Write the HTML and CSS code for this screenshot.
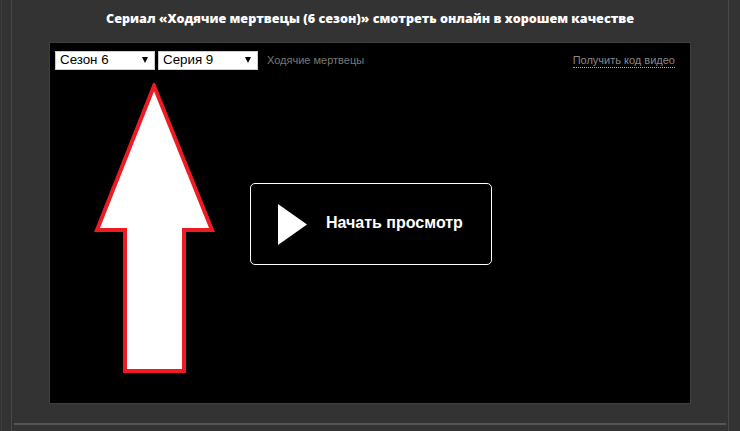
FILE: index.html
```html
<!DOCTYPE html>
<html>
  <head>
    <title>Сериал «Ходячие мертвецы (6 сезон)»</title>
    <link rel="stylesheet" href="styles.css">
  </head>
  <body>
    <div class="page">
      <div class="content">
        <h1 class="title">Сериал «Ходячие мертвецы (6 сезон)» смотреть онлайн в хорошем качестве</h1>

        <div class="player">
          <div class="player-bar">
            <span class="select-box">
              <select class="select">
                <option>Сезон 6</option>
              </select>
            </span>
            <span class="select-box">
              <select class="select">
                <option>Серия 9</option>
              </select>
            </span>
            <span class="show-name">Ходячие мертвецы</span>
            <a class="embed-link">Получить код видео</a>
          </div>

          <div class="player-main">
            <div class="start-btn">
              <svg class="play-icon" width="30" height="41" viewBox="0 0 30 41">
                <path d="M1 0 L30 20.5 L1 41 Z" fill="#fff" />
              </svg>
              <span class="start-label">Начать просмотр</span>
            </div>
          </div>

          <!-- annotation drawn over the player -->
          <svg class="arrow" width="124" height="294" viewBox="0 0 124 294">
            <path
              d="M60 3 L3 147 L31 147 L31 288 L90 288 L90 147 L118 147 Z"
              fill="#fff"
              stroke="#ed1c24"
              stroke-width="4"
              stroke-linejoin="miter"
            />
          </svg>
        </div>

        <div class="bottom-line"></div>
      </div>
    </div>
  </body>
</html>
```

FILE: styles.css
```css
html,
body {
  margin: 0;
  height: 431px;
  overflow: hidden;
}
body {
  background: #333;
  font-family: "Liberation Sans", Arial, sans-serif;
}
.page {
  height: 431px;
  margin-left: 1px;
  width: 739px;
  border-left: 1px solid #3c3c3c;
  box-sizing: border-box;
}
.content {
  margin-left: 9px;
  width: 718px;
  height: 431px;
  border-left: 1px solid #484848;
  border-right: 1px solid #484848;
  padding: 0 2px 0 2px;
  box-sizing: border-box;
}
.title {
  margin: 0;
  height: 43px;
  padding-top: 11px;
  box-sizing: border-box;
  font-family: "Open Sans", sans-serif;
  font-size: 12.6px;
  font-weight: 800;
  line-height: 16px;
  color: #fff;
  text-align: center;
}
.player {
  position: relative;
  width: 640px;
  height: 360px;
  margin: 0 auto;
  background: #000;
  box-shadow: 0 0 0 1px #3e3e3e;
}
.player-bar {
  display: flex;
  align-items: center;
  gap: 3px;
  padding: 7px 15px 0 5px;
  height: 20px;
}
.select-box {
  position: relative;
  display: block;
  width: 100px;
  height: 19px;
}
.select-box::after {
  content: "";
  position: absolute;
  right: 7px;
  top: 6px;
  border-left: 3px solid transparent;
  border-right: 3px solid transparent;
  border-top: 6px solid #000;
}
.select {
  appearance: none;
  display: block;
  width: 100%;
  height: 100%;
  margin: 0;
  padding: 0 0 1px 4px;
  border: 1px solid #ccc;
  border-radius: 0;
  background: #fff;
  color: #000;
  font-family: "Liberation Sans", Arial, sans-serif;
  font-size: 13.33px;
}
.show-name {
  margin-left: 6px;
  font-size: 11px;
  color: #777;
}
.embed-link {
  margin-left: auto;
  font-size: 11px;
  line-height: 14px;
  color: #888;
  border-bottom: 1px dotted #aaa;
}
.player-main {
  display: flex;
  justify-content: center;
  padding: 113px 0 0 2px;
}
.start-btn {
  display: flex;
  align-items: center;
  width: 242px;
  height: 82px;
  padding-left: 26px;
  box-sizing: border-box;
  border: 1px solid #fff;
  border-radius: 5px;
  color: #fff;
  font-size: 16px;
  font-weight: bold;
}
.play-icon {
  margin-right: 19px;
}
.start-label {
  padding-bottom: 3px;
}
.arrow {
  position: absolute;
  left: 44px;
  top: 40px;
}
.bottom-line {
  height: 2px;
  margin-top: 20px;
  background: #555;
}
```
